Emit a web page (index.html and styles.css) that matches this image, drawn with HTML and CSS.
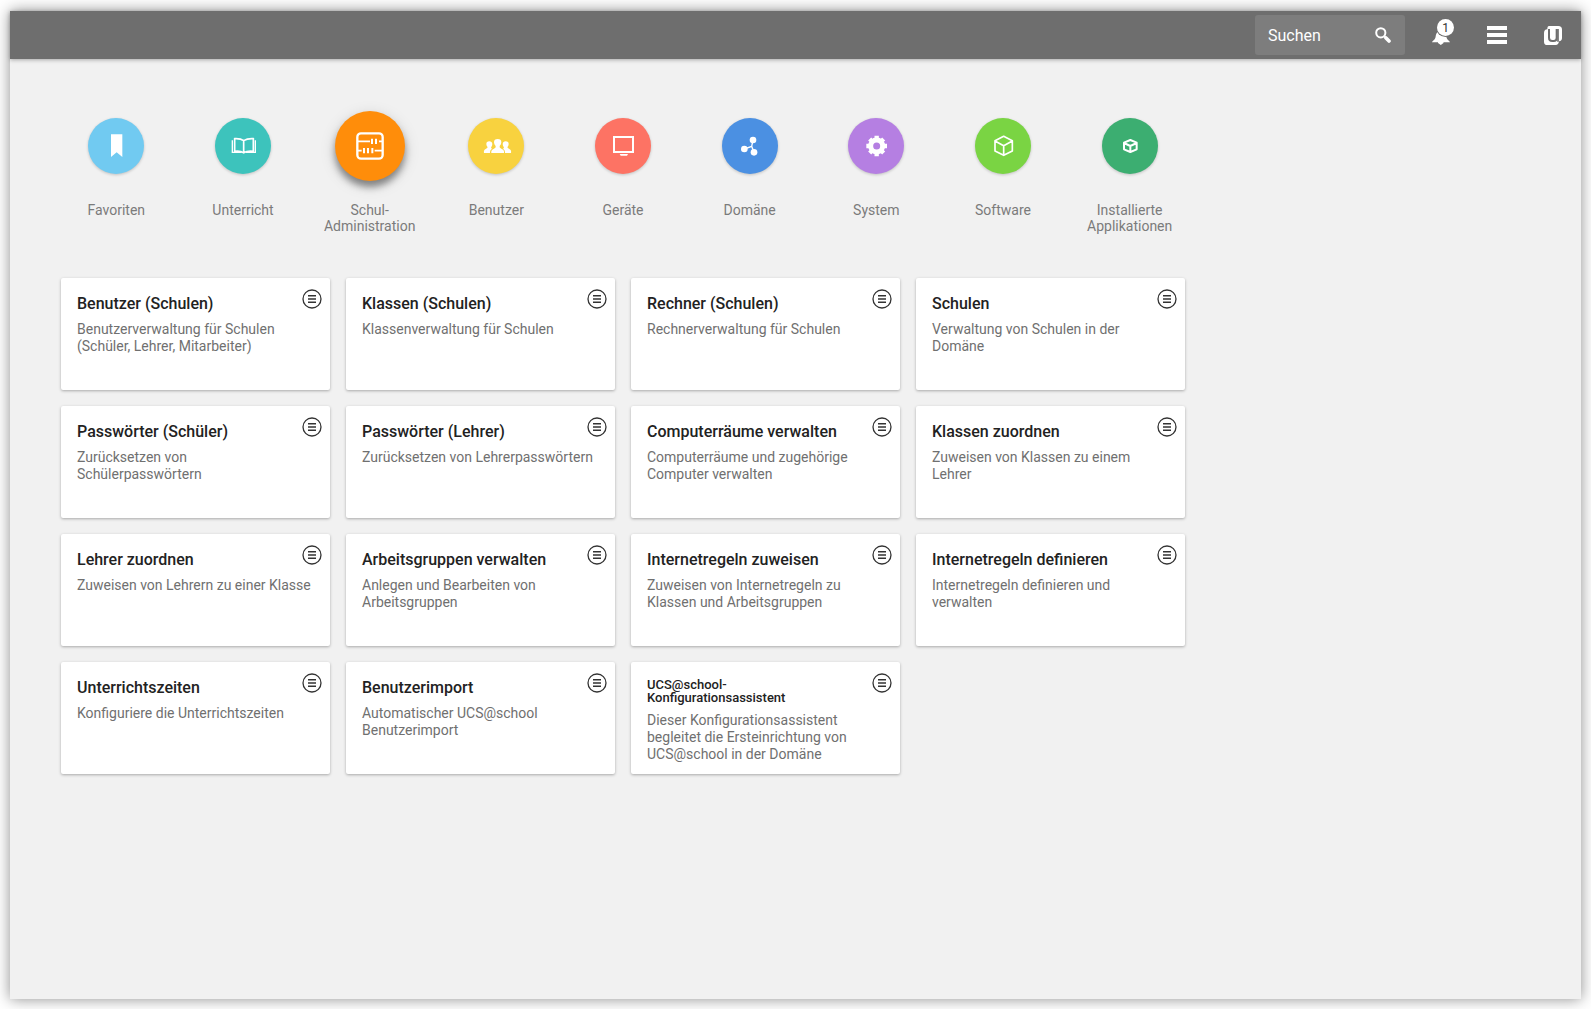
FILE: index.html
```html
<!DOCTYPE html>
<html lang="de">
<head>
<meta charset="utf-8">
<meta name="viewport" content="width=device-width, initial-scale=1">
<title>Univention Management Console</title>
<link rel="stylesheet" href="styles.css">
</head>
<body>
<svg class="symbols" width="0" height="0" aria-hidden="true">
  <symbol id="more" viewBox="0 0 20 20"><g fill="none" stroke="#333"><circle cx="10" cy="10" r="9" stroke-width="1.3"/><path stroke-width="1.4" d="M6 6.700h8M6 10h8M6 13.300h8"/></g></symbol>
</svg>
<div class="window">
  <header class="header">
    <form class="search" role="search">
      <input class="search-input" type="text" placeholder="Suchen" aria-label="Suchen">
      <button class="search-button" type="button" aria-label="Suche starten">
        <svg width="16" height="16" viewBox="0 0 16 16" fill="none" stroke="#fff"><circle cx="5.8" cy="5.8" r="4.6" stroke-width="2"/><path d="M9.3 9.3l1.6 1.6" stroke-width="2"/><path d="M11 11l3 3" stroke-width="3.6" stroke-linecap="round"/></svg>
      </button>
    </form>
    <button class="header-button" type="button" aria-label="Benachrichtigungen">
      <svg width="20" height="20" viewBox="0 0 20 20" fill="#fff"><path d="M1 17.300c0-1.200 3-2.300 3.600-5.300C5 9.500 5.600 6 10 6s5 3.500 5.400 6c.6 3 3.600 4.100 3.600 5.300zM7 17h5.500v1L9.800 20 7 18z"/></svg>
      <span class="badge">1</span>
    </button>
    <button class="header-button" type="button" aria-label="Menü">
      <svg width="20" height="18" viewBox="0 0 20 18" fill="#fff"><path d="M0 0h20v4H0zM0 7h20v4H0zM0 14h20v4H0z"/></svg>
    </button>
    <button class="header-button" type="button" aria-label="Univention">
      <svg width="18" height="19" viewBox="0 0 54 57"><path fill="#fff" d="M15 0h28q11 0 11 11v25q0 9-9 10-1 11-10 11H10Q0 57 0 47V21q0-10 10-11 0-10 5-10z"/><path fill="none" stroke="#6e6e6e" stroke-width="6" d="M15 9v26q0 10 10 10h4q9 0 9-9V9"/><path fill="none" stroke="#6e6e6e" stroke-width="5" d="M42 9v38"/></svg>
    </button>
  </header>

  <main class="content">
    <nav class="categories" aria-label="Kategorien">
      <a class="category" href="#favoriten"><span class="disc sky"><svg viewBox="-84 -84 168 168"><path fill="#fff" d="M-15-35h34v68L2 19l-17 14z"/></svg></span>Favoriten</a>
      <a class="category" href="#unterricht"><span class="disc teal"><svg viewBox="-84 -84 168 168" fill="none" stroke="#fff"><path stroke-width="5" d="M2-16Q-7-23-25-22v38Q-8 14 2 20 13 14 31 16v-38Q13-23 2-16zV20"/><path stroke-width="4" d="M-32-17v36h28M37-17v36H9"/></svg></span>Unterricht</a>
      <a class="category" href="#schul-administration"><span class="disc orange active"><svg viewBox="-105 -105 210 210" fill="none" stroke="#fff"><rect x="-38" y="-38" width="76" height="76" rx="11" stroke-width="7"/><path stroke-width="5" d="M-38-14H0M27-14h11M-38 14h13M14 14h24"/><path stroke-width="6" d="M6-22v16M18-22v16M-18 6v16M-6 6v16M7 6v16"/></svg></span>Schul-Administration</a>
      <a class="category" href="#benutzer"><span class="disc yellow"><svg viewBox="-84 -84 168 168" fill="#fff"><path d="M-14 21q-2-9 8-13Q1 5-1 0-6-5-6-11q0-10 11-10t11 10Q16-5 11 0 9 5 16 8q10 4 8 13z"/><path d="M-36 21q-2-9 5-12 8-3 5-7-3-3-3-8 0-8 9-8 8 0 9 8 0 5-3 9-2 3 2 5-7 4-6 13zM45 21q2-9-5-12-8-3-5-7 3-3 3-8 0-8-9-8-8 0-9 8 0 5 3 9 2 3-2 5 7 4 6 13z"/></svg></span>Benutzer</a>
      <a class="category" href="#geraete"><span class="disc red"><svg viewBox="-84 -84 168 168"><path fill="none" stroke="#fff" stroke-width="6" d="M-27-27h57v45h-57z"/><path fill="#fff" d="M-10 24h25l-3 5H-7z"/></svg></span>Geräte</a>
      <a class="category" href="#domaene"><span class="disc blue"><svg viewBox="-84 -84 168 168" fill="#fff"><circle cx="9" cy="-18" r="10"/><circle cx="-17" cy="9" r="10"/><circle cx="12" cy="19" r="10"/><path fill="none" stroke="#fff" stroke-width="4" d="M9-18L5 1l7 18M5 1l-22 8"/></svg></span>Domäne</a>
      <a class="category" href="#system"><span class="disc purple"><svg viewBox="-84 -84 168 168"><g transform="translate(2 0)" stroke="#fff"><circle r="18" fill="none" stroke-width="15"/><path stroke-width="13" stroke-linejoin="round" d="M0-31v10M0 21v10M-31 0h10M21 0h10M-21-21l7 7M14 14l7 7M21-21l-7 7M-14 14l-7 7"/></g></svg></span>System</a>
      <a class="category" href="#software"><span class="disc lime"><svg viewBox="-84 -84 168 168" fill="none" stroke="#fff" stroke-width="5" stroke-linejoin="round"><path d="M2-29l26 13v31L2 28l-26-13v-31zM-24-15L2-1l26-14M2-1v29"/></svg></span>Software</a>
      <a class="category" href="#applikationen"><span class="disc green"><svg viewBox="-84 -84 168 168" fill="none" stroke="#fff" stroke-width="6" stroke-linejoin="round"><path d="M1-18l19 8v20L1 18l-19-8v-20zM-18-9L1 0l19-9M1 0v18"/></svg></span>Installierte Applikationen</a>
    </nav>

    <section class="gallery" aria-label="Module">
      <article class="card"><h2>Benutzer (Schulen)</h2><p>Benutzerverwaltung für Schulen (Schüler, Lehrer, Mitarbeiter)</p><button class="more" type="button" aria-label="Optionen"><svg width="20" height="20"><use href="#more"/></svg></button></article>
      <article class="card"><h2>Klassen (Schulen)</h2><p>Klassenverwaltung für Schulen</p><button class="more" type="button" aria-label="Optionen"><svg width="20" height="20"><use href="#more"/></svg></button></article>
      <article class="card"><h2>Rechner (Schulen)</h2><p>Rechnerverwaltung für Schulen</p><button class="more" type="button" aria-label="Optionen"><svg width="20" height="20"><use href="#more"/></svg></button></article>
      <article class="card"><h2>Schulen</h2><p>Verwaltung von Schulen in der Domäne</p><button class="more" type="button" aria-label="Optionen"><svg width="20" height="20"><use href="#more"/></svg></button></article>
      <article class="card"><h2>Passwörter (Schüler)</h2><p>Zurücksetzen von Schülerpasswörtern</p><button class="more" type="button" aria-label="Optionen"><svg width="20" height="20"><use href="#more"/></svg></button></article>
      <article class="card"><h2>Passwörter (Lehrer)</h2><p>Zurücksetzen von Lehrerpasswörtern</p><button class="more" type="button" aria-label="Optionen"><svg width="20" height="20"><use href="#more"/></svg></button></article>
      <article class="card"><h2>Computerräume verwalten</h2><p>Computerräume und zugehörige Computer verwalten</p><button class="more" type="button" aria-label="Optionen"><svg width="20" height="20"><use href="#more"/></svg></button></article>
      <article class="card"><h2>Klassen zuordnen</h2><p>Zuweisen von Klassen zu einem Lehrer</p><button class="more" type="button" aria-label="Optionen"><svg width="20" height="20"><use href="#more"/></svg></button></article>
      <article class="card"><h2>Lehrer zuordnen</h2><p>Zuweisen von Lehrern zu einer Klasse</p><button class="more" type="button" aria-label="Optionen"><svg width="20" height="20"><use href="#more"/></svg></button></article>
      <article class="card"><h2>Arbeitsgruppen verwalten</h2><p>Anlegen und Bearbeiten von Arbeitsgruppen</p><button class="more" type="button" aria-label="Optionen"><svg width="20" height="20"><use href="#more"/></svg></button></article>
      <article class="card"><h2>Internetregeln zuweisen</h2><p>Zuweisen von Internetregeln zu Klassen und Arbeitsgruppen</p><button class="more" type="button" aria-label="Optionen"><svg width="20" height="20"><use href="#more"/></svg></button></article>
      <article class="card"><h2>Internetregeln definieren</h2><p>Internetregeln definieren und verwalten</p><button class="more" type="button" aria-label="Optionen"><svg width="20" height="20"><use href="#more"/></svg></button></article>
      <article class="card"><h2>Unterrichtszeiten</h2><p>Konfiguriere die Unterrichtszeiten</p><button class="more" type="button" aria-label="Optionen"><svg width="20" height="20"><use href="#more"/></svg></button></article>
      <article class="card"><h2>Benutzerimport</h2><p>Automatischer UCS@school Benutzerimport</p><button class="more" type="button" aria-label="Optionen"><svg width="20" height="20"><use href="#more"/></svg></button></article>
      <article class="card"><h2 class="long">UCS@school-Konfigurationsassistent</h2><p>Dieser Konfigurationsassistent begleitet die Ersteinrichtung von UCS@school in der Domäne</p><button class="more" type="button" aria-label="Optionen"><svg width="20" height="20"><use href="#more"/></svg></button></article>
    </section>
  </main>
</div>
</body>
</html>
```

FILE: styles.css
```css
* {
  box-sizing: border-box;
}

body {
  margin: 0;
  padding: 11px 10px 10px;
  min-height: 100vh;
  display: flex;
  background: #fff;
  font-family: Roboto, "Liberation Sans", sans-serif;
  font-size: 14px;
}

button {
  padding: 0;
  border: 0;
  background: none;
  font: inherit;
  cursor: pointer;
}

svg {
  display: block;
}

.symbols {
  position: absolute;
}

.window {
  flex: 1;
  min-width: 0;
  background: #f1f1f1;
  box-shadow: 0 0 14px rgba(0, 0, 0, 0.45);
}

.header {
  display: flex;
  justify-content: flex-end;
  align-items: center;
  height: 48px;
  background: #6e6e6e;
  box-shadow: 0 1px 4px rgba(0, 0, 0, 0.3);
}

.search {
  display: flex;
  align-items: center;
  width: 150px;
  height: 40px;
  margin-right: 8px;
  padding: 0 14px 0 13px;
  border-radius: 3px;
  background: #7d7d7d;
}

.search-input {
  flex: 1;
  min-width: 0;
  padding: 0;
  border: 0;
  outline: 0;
  background: none;
  color: #fff;
  font: inherit;
  font-size: 16px;
}

.search-input::placeholder {
  color: #fff;
  opacity: 1;
}

.header-button {
  position: relative;
  display: flex;
  align-items: center;
  justify-content: center;
  width: 56px;
  height: 48px;
}

.badge {
  position: absolute;
  top: 8px;
  left: 24px;
  width: 17px;
  height: 17px;
  border-radius: 50%;
  background: #fff;
  box-shadow: 0 0 0 1px #6e6e6e;
  color: #333;
  font-size: 12px;
  line-height: 18px;
  text-align: center;
}

.content {
  padding: 52px 43px;
}

.categories {
  display: grid;
  grid-template-columns: repeat(9, 1fr);
  max-width: 1140px;
  margin-bottom: 44px;
}

.category {
  display: flex;
  flex-direction: column;
  align-items: center;
  padding: 0 16px;
  color: #7b7b7b;
  line-height: 16px;
  text-align: center;
  text-decoration: none;
}

.disc {
  width: 56px;
  height: 56px;
  margin: 7px 0 28px;
  border-radius: 50%;
  box-shadow: 0 1px 3px rgba(0, 0, 0, 0.2);
}

.disc.active {
  width: 70px;
  height: 70px;
  margin: 0 0 21px;
  box-shadow: 0 6px 7px rgba(0, 0, 0, 0.4), 0 4px 16px rgba(0, 0, 0, 0.15);
}

.sky { background: #71caf1; }
.teal { background: #3dc3bc; }
.orange { background: #ff8d0a; }
.yellow { background: #f8d23f; }
.red { background: #fd7364; }
.blue { background: #4b90e2; }
.purple { background: #b57fe2; }
.lime { background: #7ad443; }
.green { background: #3cae71; }

.gallery {
  display: grid;
  grid-template-columns: repeat(4, 1fr);
  gap: 16px;
  max-width: 1140px;
  padding: 0 8px;
}

.card {
  position: relative;
  min-height: 112px;
  padding: 16px;
  border-radius: 2px;
  background: #fff;
  box-shadow: 0 1px 3px rgba(0, 0, 0, 0.3);
}

.card h2 {
  margin: 0 24px 8px 0;
  color: #222;
  font-size: 16px;
  font-weight: 500;
  line-height: 19px;
}

.card .long {
  font-size: 13px;
  line-height: 13px;
}

.card p {
  margin: 0;
  color: #707070;
  line-height: 17px;
}

.card:has(.long) {
  padding-bottom: 0;
}

.more {
  position: absolute;
  top: 11px;
  right: 8px;
}
```
